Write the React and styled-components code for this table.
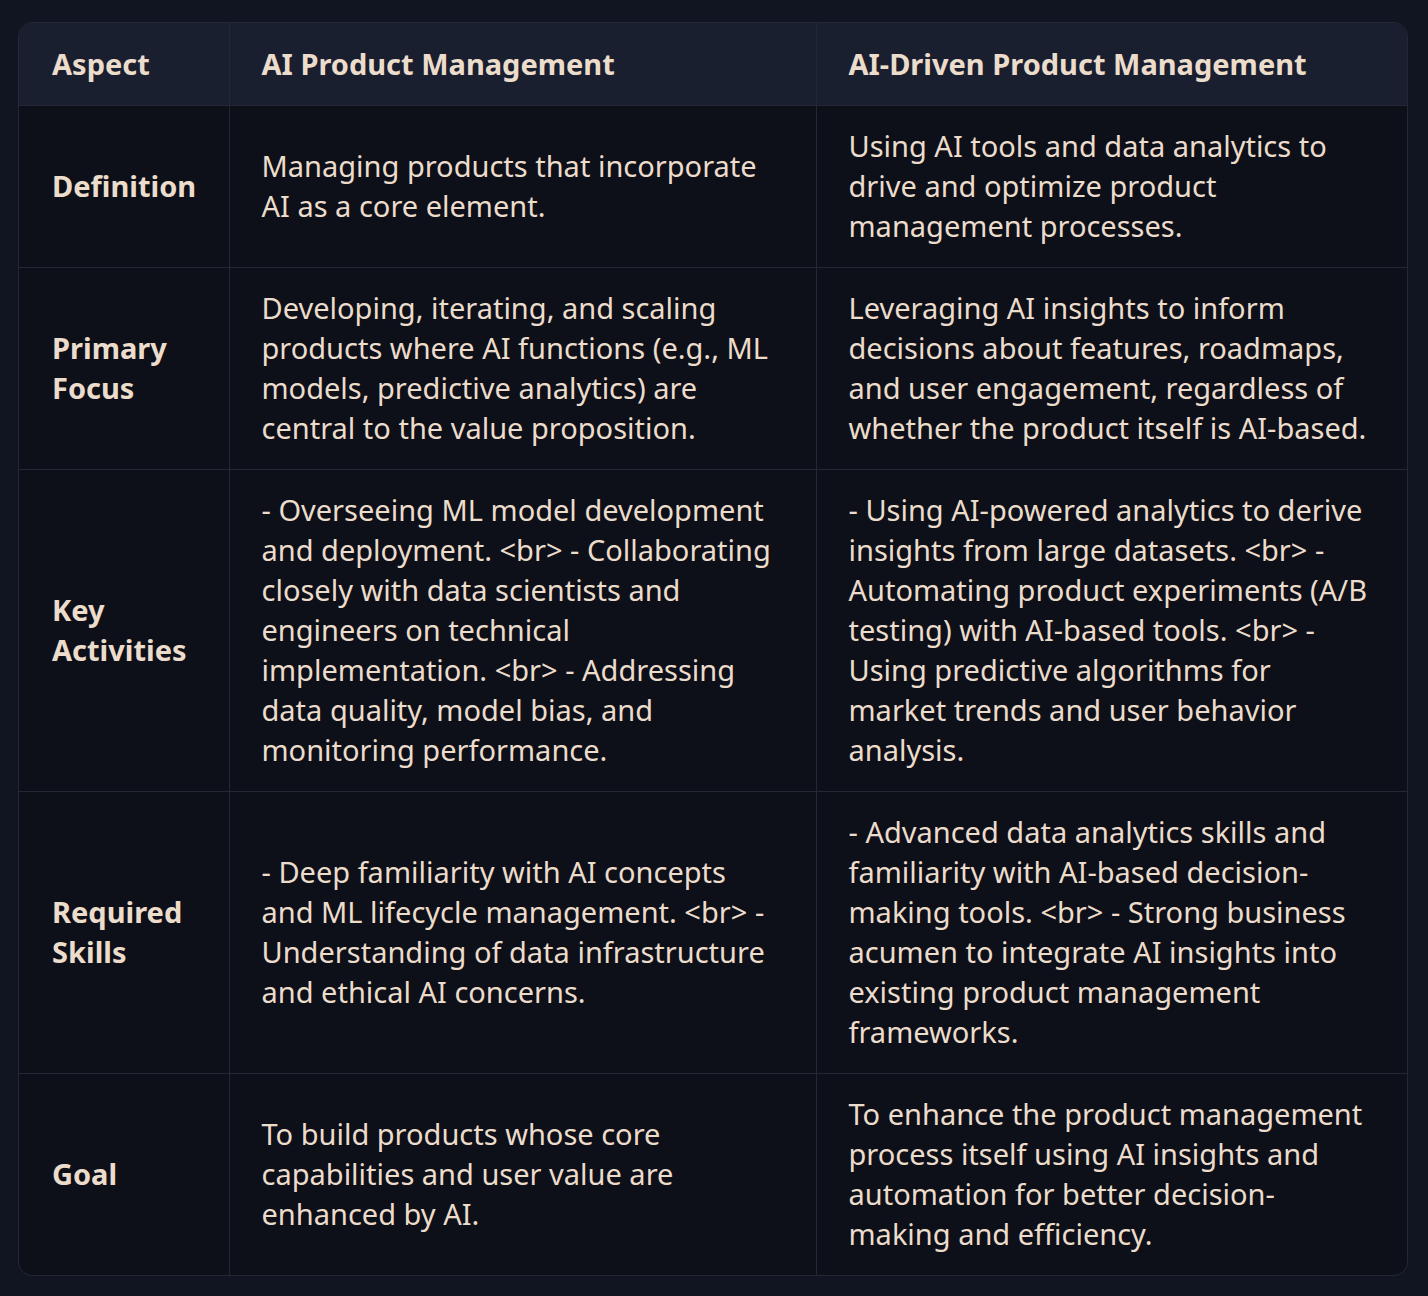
import React from "react";
import styled, { createGlobalStyle } from "styled-components";

const Global = createGlobalStyle`
  html, body { margin: 0; padding: 0; background: #111521; }
  body { font-family: "Noto Sans", sans-serif; }
`;

const Page = styled.div`
  padding: 22px 20px 20px 18px;
  box-sizing: border-box;
  width: 1428px;
`;

const Wrap = styled.div`
  border: 1px solid #242836;
  border-radius: 14px;
  overflow: hidden;
  background: #0d1019;
`;

const Table = styled.table`
  width: 100%;
  border-collapse: collapse;
  table-layout: fixed;
  color: #ecdccb;
  font-size: 29px;
  line-height: 40px;
`;

const Head = styled.thead`
  background: #1a1f30;
`;

const Th = styled.th`
  text-align: left;
  font-weight: 700;
  padding: 21px 33px 21px ${(p) => (p.$first ? "33px" : "32px")};
  border-left: ${(p) => (p.$first ? "none" : "1px solid #242836")};
  border-bottom: 1px solid #242836;
  vertical-align: middle;
`;

const Td = styled.td`
  padding: 20px 33px 21px ${(p) => (p.$first ? "33px" : "32px")};
  border-left: ${(p) => (p.$first ? "none" : "1px solid #242836")};
  border-bottom: ${(p) => (p.$last ? "none" : "1px solid #242836")};
  font-weight: ${(p) => (p.$first ? 700 : 400)};
  vertical-align: middle;
`;

const rows = [
  [
    "Definition",
    "Managing products that incorporate AI as a core element.",
    "Using AI tools and data analytics to drive and optimize product management processes.",
  ],
  [
    "Primary Focus",
    "Developing, iterating, and scaling products where AI functions (e.g., ML models, predictive analytics) are central to the value proposition.",
    "Leveraging AI insights to inform decisions about features, roadmaps, and user engagement, regardless of whether the product itself is AI-based.",
  ],
  [
    "Key Activities",
    "- Overseeing ML model development and deployment. <br> - Collaborating closely with data scientists and engineers on technical implementation. <br> - Addressing data quality, model bias, and monitoring performance.",
    "- Using AI-powered analytics to derive insights from large datasets. <br> - Automating product experiments (A/B testing) with AI-based tools. <br> - Using predictive algorithms for market trends and user behavior analysis.",
  ],
  [
    "Required Skills",
    "- Deep familiarity with AI concepts and ML lifecycle management. <br> - Understanding of data infrastructure and ethical AI concerns.",
    "- Advanced data analytics skills and familiarity with AI-based decision-making tools. <br> - Strong business acumen to integrate AI insights into existing product management frameworks.",
  ],
  [
    "Goal",
    "To build products whose core capabilities and user value are enhanced by AI.",
    "To enhance the product management process itself using AI insights and automation for better decision-making and efficiency.",
  ],
];

export default function App() {
  return (
    <>
      <Global />
      <Page>
        <Wrap>
          <Table>
            <colgroup>
              <col style={{ width: "210px" }} />
              <col style={{ width: "587px" }} />
              <col />
            </colgroup>
            <Head>
              <tr>
                <Th $first>Aspect</Th>
                <Th>AI Product Management</Th>
                <Th>AI-Driven Product Management</Th>
              </tr>
            </Head>
            <tbody>
              {rows.map((r, i) => (
                <tr key={i}>
                  <Td $first $last={i === rows.length - 1}>{r[0]}</Td>
                  <Td $last={i === rows.length - 1}>{r[1]}</Td>
                  <Td $last={i === rows.length - 1}>{r[2]}</Td>
                </tr>
              ))}
            </tbody>
          </Table>
        </Wrap>
      </Page>
    </>
  );
}
